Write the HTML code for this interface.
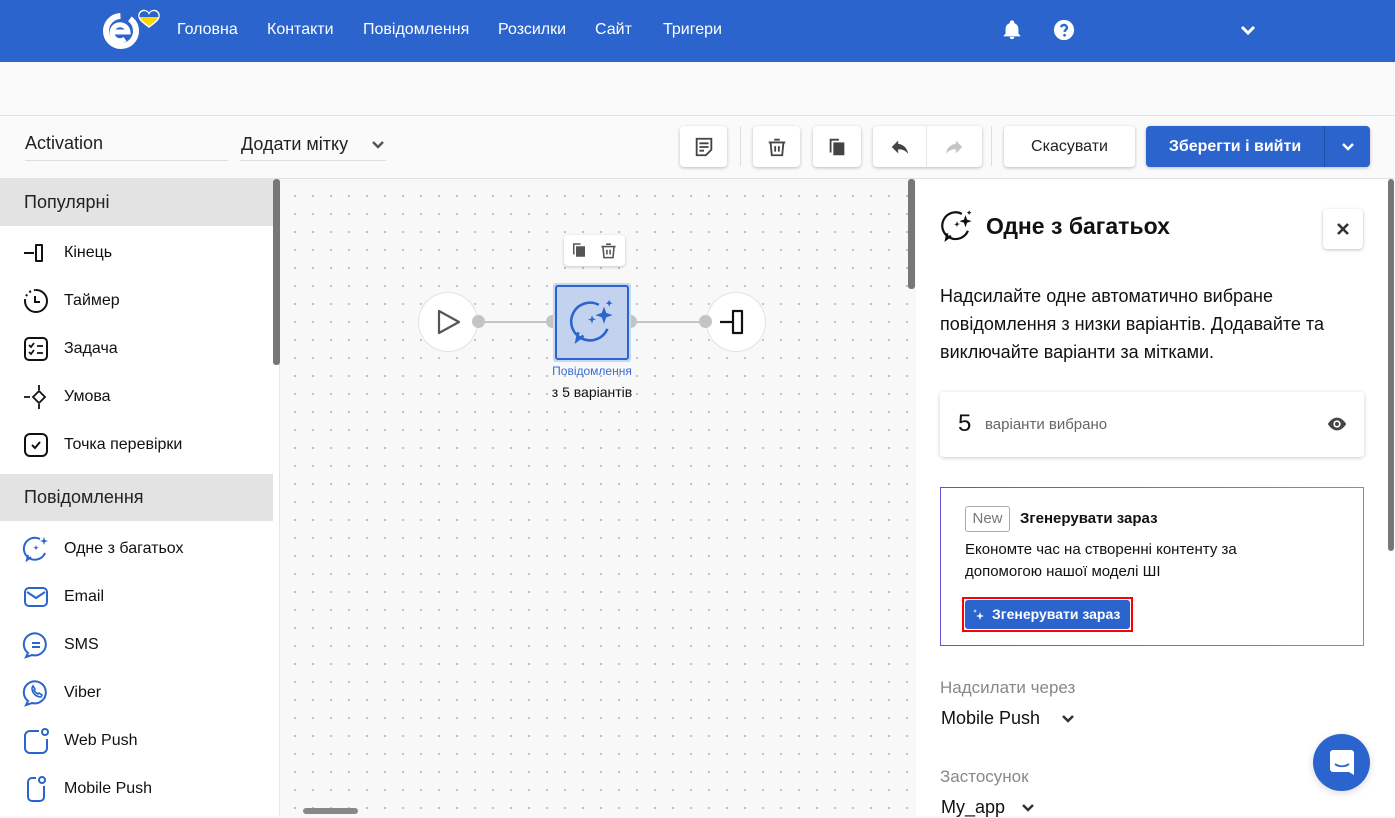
<!DOCTYPE html>
<html><head><meta charset="utf-8"><style>
*{box-sizing:border-box;margin:0;padding:0}
body{width:1395px;height:816px;overflow:hidden;font-family:"Liberation Sans","DejaVu Sans",sans-serif;background:#f9f9f9;position:relative;color:#111}
.abs{position:absolute}
.hdr{left:0;top:0;width:1395px;height:62px;background:#2b64cc}
.nav{color:#fff;font-size:16px;top:21px}
.tb{left:0;top:115px;width:1395px;height:64px;background:#fafafa;border-top:1px solid #e2e2e2;border-bottom:1px solid #e2e2e2}
.btn{background:#fff;border-radius:4px;box-shadow:0 1px 3px rgba(0,0,0,.25);top:126px;height:41px;display:flex;align-items:center;justify-content:center}
.side{left:0;top:179px;width:280px;height:637px;background:#fff;border-right:1px solid #e6e6e6}
.sec{position:absolute;left:0;width:273px;height:47px;background:#e3e3e3;font-size:18px;padding:13px 0 0 24px;color:#222}
.it{position:absolute;left:22px;font-size:16px;display:flex;align-items:center;gap:14px;color:#111}
.it svg{width:28px;height:28px}
.canvas{left:281px;top:179px;width:635px;height:637px;background-color:#f8f8f8;background-image:radial-gradient(circle,#bdbdbd 1px,transparent 1.2px);background-size:18px 18px;background-position:5px 8px}
.panel{left:916px;top:179px;width:479px;height:637px;background:#fff}
</style></head><body>
<div class="abs hdr"></div>
<svg class="abs" style="left:100px;top:8px" width="62" height="44" viewBox="0 0 62 44">
<circle cx="21" cy="23" r="15" fill="none" stroke="#fff" stroke-width="6" stroke-dasharray="70 10"/>
<path d="M12 24h16a8 8 0 1 0-3 7" fill="none" stroke="#fff" stroke-width="5"/>
<path d="M49 19c-5-4-10-7-10-11a4.5 4.5 0 0 1 10-1a4.5 4.5 0 0 1 10 1c0 4-5 7-10 11z" fill="#ffd500" stroke="#fff" stroke-width="1.5"/>
<path d="M39.5 9a4.5 4.5 0 0 1 9.5-2a4.5 4.5 0 0 1 9.5 2z" fill="#2b64cc"/>
</svg>
<div class="abs nav" style="left:177px">Головна</div>
<div class="abs nav" style="left:267px">Контакти</div>
<div class="abs nav" style="left:363px">Повідомлення</div>
<div class="abs nav" style="left:498px">Розсилки</div>
<div class="abs nav" style="left:595px">Сайт</div>
<div class="abs nav" style="left:663px">Тригери</div>
<svg class="abs" style="left:1001px;top:19px" width="22" height="22" viewBox="0 0 24 24"><path d="M12 22a2.5 2.5 0 0 0 2.5-2.5h-5A2.5 2.5 0 0 0 12 22zm7-6V11c0-3-1.6-5.6-4.5-6.3V4a2.5 2.5 0 0 0-5 0v.7C6.6 5.4 5 8 5 11v5l-2 2v1h18v-1z" fill="#fff"/></svg>
<svg class="abs" style="left:1053px;top:19px" width="22" height="22" viewBox="0 0 24 24"><circle cx="12" cy="12" r="11" fill="#fff"/><path d="M8.8 9a3.3 3.3 0 0 1 6.5.5c0 2-2.6 2.3-2.6 4.5" fill="none" stroke="#2b64cc" stroke-width="2.6"/><circle cx="12.6" cy="17.7" r="1.5" fill="#2b64cc"/></svg>
<svg class="abs" style="left:1240px;top:24px" width="16" height="12" viewBox="0 0 16 12"><path d="M2 3l6 6 6-6" fill="none" stroke="#fff" stroke-width="3"/></svg>

<div class="abs tb"></div>
<div class="abs" style="left:25px;top:133px;font-size:18px;color:#222">Activation</div>
<div class="abs" style="left:25px;top:160px;width:203px;height:1px;background:#ddd"></div>
<div class="abs" style="left:241px;top:134px;font-size:18px;color:#222">Додати мітку</div>
<svg class="abs" style="left:371px;top:140px" width="14" height="10" viewBox="0 0 14 10"><path d="M2 2l5 5 5-5" fill="none" stroke="#555" stroke-width="2.5"/></svg>
<div class="abs" style="left:240px;top:160px;width:146px;height:1px;background:#ddd"></div>

<div class="abs btn" style="left:680px;width:47px"><svg width="22" height="22" viewBox="0 0 24 24"><path d="M4 3h16v12l-6 6H4z" fill="none" stroke="#444" stroke-width="2"/><path d="M7 8h10M7 12h10M7 16h5" stroke="#444" stroke-width="2"/></svg></div>
<div class="abs" style="left:740px;top:126px;width:1px;height:40px;background:#ddd"></div>
<div class="abs btn" style="left:753px;width:47px"><svg width="22" height="22" viewBox="0 0 24 24"><path d="M5 7h14l-1.3 14H6.3zM3 7h18M9 4h6M10 11v6M14 11v6" fill="none" stroke="#444" stroke-width="2"/></svg></div>
<div class="abs btn" style="left:813px;width:48px"><svg width="22" height="22" viewBox="0 0 24 24"><path d="M4 3h10v2H6v13H4z" fill="#444"/><rect x="8" y="7" width="12" height="14" fill="#444"/></svg></div>
<div class="abs btn" style="left:873px;width:109px;justify-content:flex-start">
<div style="width:54px;height:41px;display:flex;align-items:center;justify-content:center;border-right:1px solid #e6e6e6"><svg width="22" height="22" viewBox="0 0 24 24"><path d="M10 5L3 12l7 7v-4.5c5 0 8 1.5 11 5-1-5-4-10-11-11z" fill="#444"/></svg></div>
<div style="width:54px;display:flex;justify-content:center"><svg width="22" height="22" viewBox="0 0 24 24"><path d="M14 5l7 7-7 7v-4.5c-5 0-8 1.5-11 5 1-5 4-10 11-11z" fill="#c4c4c4"/></svg></div></div>
<div class="abs" style="left:991px;top:126px;width:1px;height:40px;background:#ddd"></div>
<div class="abs btn" style="left:1004px;width:131px;font-size:16px;color:#222">Скасувати</div>
<div class="abs btn" style="left:1146px;width:224px;background:#2b64cc;justify-content:flex-start">
<div style="width:178px;text-align:center;color:#fff;font-size:16px;font-weight:bold">Зберегти і вийти</div>
<div style="width:1px;height:41px;background:#1f50a8"></div>
<svg style="margin-left:16px" width="14" height="10" viewBox="0 0 14 10"><path d="M2 2l5 5 5-5" fill="none" stroke="#fff" stroke-width="2.5"/></svg></div>

<div class="abs side">
<div class="sec" style="top:0">Популярні</div>
<div class="it" style="top:60px"><svg viewBox="0 0 28 28"><path d="M2 14h10M14 6h6v16h-6z" fill="none" stroke="#111" stroke-width="2" stroke-linejoin="round"/></svg>Кінець</div>
<div class="it" style="top:108px"><svg viewBox="0 0 28 28"><path d="M14 3a11 11 0 1 1-11 11" fill="none" stroke="#111" stroke-width="2"/><path d="M3 14a11 11 0 0 1 11-11" fill="none" stroke="#111" stroke-width="2" stroke-dasharray="2 3"/><path d="M13 9v6h5" fill="none" stroke="#111" stroke-width="2"/></svg>Таймер</div>
<div class="it" style="top:156px"><svg viewBox="0 0 28 28"><rect x="3" y="3" width="22" height="22" rx="4" fill="none" stroke="#111" stroke-width="2"/><path d="M7 10l2 2 3-4M7 17l2 2 3-4M15 11h6M15 18h6" fill="none" stroke="#111" stroke-width="1.8"/></svg>Задача</div>
<div class="it" style="top:204px"><svg viewBox="0 0 28 28"><path d="M17 8l6 6-6 6-6-6zM2 14h6M17 2v5M17 21v5" fill="none" stroke="#111" stroke-width="1.8"/></svg>Умова</div>
<div class="it" style="top:252px"><svg viewBox="0 0 28 28"><rect x="3" y="3" width="22" height="22" rx="5" fill="none" stroke="#111" stroke-width="2"/><path d="M10 14l3 3 5-6" fill="none" stroke="#111" stroke-width="2"/></svg>Точка перевірки</div>
<div class="sec" style="top:295px">Повідомлення</div>
<div class="it" style="top:356px"><svg viewBox="0 0 28 28"><path d="M18 4a11 11 0 1 0 5 14M9 22l-4 3 1-5" fill="none" stroke="#2b64cc" stroke-width="2"/><path d="M22 2l1 3 3 1-3 1-1 3-1-3-3-1 3-1zM14 10l.7 2 2 .7-2 .7-.7 2-.7-2-2-.7 2-.7z" fill="#2b64cc"/></svg>Одне з багатьох</div>
<div class="it" style="top:404px"><svg viewBox="0 0 28 28"><rect x="3" y="5" width="22" height="18" rx="4" fill="none" stroke="#2b64cc" stroke-width="2"/><path d="M5 9l9 6 9-6" fill="none" stroke="#2b64cc" stroke-width="2"/></svg>Email</div>
<div class="it" style="top:452px"><svg viewBox="0 0 28 28"><path d="M6 22a11 11 0 1 1 4 2l-6 2z" fill="none" stroke="#2b64cc" stroke-width="2"/><path d="M10 12h8M10 16h8" stroke="#2b64cc" stroke-width="2"/></svg>SMS</div>
<div class="it" style="top:500px"><svg viewBox="0 0 28 28"><path d="M6 22a11 11 0 1 1 4 2l-6 2z" fill="none" stroke="#2b64cc" stroke-width="2"/><path d="M10 9c0 5 4 9 9 9l1-2-3-2-1 1c-2-1-3-2-4-4l1-1-2-3z" fill="none" stroke="#2b64cc" stroke-width="1.6"/></svg>Viber</div>
<div class="it" style="top:548px"><svg viewBox="0 0 28 28"><path d="M17 4H8a5 5 0 0 0-5 5v12a5 5 0 0 0 5 5h12a5 5 0 0 0 5-5v-9" fill="none" stroke="#2b64cc" stroke-width="2"/><circle cx="23" cy="5" r="3" fill="none" stroke="#2b64cc" stroke-width="2"/></svg>Web Push</div>
<div class="it" style="top:596px"><svg viewBox="0 0 28 28"><path d="M14 3h-4a4 4 0 0 0-4 4v15a4 4 0 0 0 4 4h8a4 4 0 0 0 4-4v-11" fill="none" stroke="#2b64cc" stroke-width="2"/><circle cx="20" cy="5" r="3" fill="none" stroke="#2b64cc" stroke-width="2"/></svg>Mobile Push</div>
</div>
<div class="abs" style="left:273px;top:179px;width:7px;height:186px;background:#777;border-radius:3px"></div>

<div class="abs canvas"></div>
<div class="abs" style="left:908px;top:179px;width:7px;height:110px;background:#777;border-radius:3px"></div>
<div class="abs" style="left:303px;top:808px;width:55px;height:6px;background:#888;border-radius:3px"></div>
<div class="abs" style="left:478px;top:321px;width:75px;height:2px;background:#c4c4c4"></div>
<div class="abs" style="left:631px;top:321px;width:75px;height:2px;background:#c4c4c4"></div>
<div class="abs" style="left:418px;top:292px;width:60px;height:60px;border-radius:50%;background:#fff;border:1px solid #e2e2e2"></div>
<svg class="abs" style="left:436px;top:309px" width="26" height="26" viewBox="0 0 26 26"><path d="M3 2l20 11L3 24z" fill="none" stroke="#555" stroke-width="2.2" stroke-linejoin="round"/></svg>
<div class="abs" style="left:706px;top:292px;width:60px;height:60px;border-radius:50%;background:#fff;border:1px solid #e2e2e2"></div>
<svg class="abs" style="left:718px;top:308px" width="30" height="28" viewBox="0 0 30 28"><path d="M2 14h12M15 3h9v22h-9z" fill="none" stroke="#111" stroke-width="2.2" stroke-linejoin="round"/></svg>
<div class="abs" style="left:472px;top:315px;width:13px;height:13px;border-radius:50%;background:#c4c4c4"></div>
<div class="abs" style="left:546px;top:315px;width:13px;height:13px;border-radius:50%;background:#c4c4c4"></div>
<div class="abs" style="left:624px;top:315px;width:13px;height:13px;border-radius:50%;background:#c4c4c4"></div>
<div class="abs" style="left:699px;top:315px;width:13px;height:13px;border-radius:50%;background:#c4c4c4"></div>
<div class="abs" style="left:553px;top:283px;width:78px;height:79px;background:#c8d6f0;border-radius:3px"></div>
<div class="abs" style="left:555px;top:285px;width:74px;height:75px;background:#c3d3ef;border:2.5px solid #2b64cc;border-radius:3px"></div>
<svg class="abs" style="left:568px;top:298px" width="48" height="48" viewBox="0 0 28 28"><path d="M18 4a11 11 0 1 0 5 14M9 22l-4 3 1-5" fill="none" stroke="#2b64cc" stroke-width="1.5"/><path d="M21 5l1.3 3.7 3.7 1.3-3.7 1.3L21 15l-1.3-3.7L16 10l3.7-1.3zM24 1l.6 1.4 1.4.6-1.4.6L24 5l-.6-1.4L22 3l1.4-.6zM14 10l.6 1.8 1.8.6-1.8.6L14 15l-.6-1.8-1.8-.6 1.8-.6z" fill="#2b64cc"/></svg>
<div class="abs" style="left:564px;top:235px;width:61px;height:31px;background:#fff;border-radius:4px;box-shadow:0 1px 3px rgba(0,0,0,.2)"></div>
<svg class="abs" style="left:570px;top:241px" width="18" height="18" viewBox="0 0 24 24"><path d="M4 3h10v2H6v13H4z" fill="#555"/><rect x="8" y="7" width="12" height="14" fill="#555"/></svg>
<svg class="abs" style="left:599px;top:241px" width="19" height="19" viewBox="0 0 24 24"><path d="M5 7h14l-1.3 14H6.3zM3 7h18M9 4h6M10 11v6M14 11v6" fill="none" stroke="#555" stroke-width="2"/></svg>
<div class="abs" style="left:540px;top:364px;width:104px;text-align:center;font-size:12px;color:#3b6bd0">Повідомлення</div>
<div class="abs" style="left:530px;top:384px;width:124px;text-align:center;font-size:14px;color:#111">з 5 варіантів</div>

<div class="abs panel"></div>
<div class="abs" style="left:1388px;top:179px;width:6px;height:372px;background:#777;border-radius:3px"></div>
<svg class="abs" style="left:940px;top:209px" width="34" height="34" viewBox="0 0 28 28"><path d="M18 4a11 11 0 1 0 5 14M9 22l-4 3 1-5" fill="none" stroke="#111" stroke-width="1.8"/><path d="M21 5l1.3 3.7 3.7 1.3-3.7 1.3L21 15l-1.3-3.7L16 10l3.7-1.3zM24 1l.6 1.4 1.4.6-1.4.6L24 5l-.6-1.4L22 3l1.4-.6zM14 10l.6 1.8 1.8.6-1.8.6L14 15l-.6-1.8-1.8-.6 1.8-.6z" fill="#111"/></svg>
<div class="abs" style="left:986px;top:213px;font-size:23px;font-weight:bold;color:#111">Одне з багатьох</div>
<div class="abs btn" style="left:1323px;top:209px;width:40px;height:40px"><svg width="14" height="14" viewBox="0 0 14 14"><path d="M2 2l10 10M12 2L2 12" stroke="#333" stroke-width="2.6"/></svg></div>
<div class="abs" style="left:940px;top:282px;width:430px;font-size:18px;line-height:28px;color:#111">Надсилайте одне автоматично вибране повідомлення з низки варіантів. Додавайте та виключайте варіанти за мітками.</div>
<div class="abs" style="left:940px;top:392px;width:424px;height:65px;background:#fff;border-radius:4px;box-shadow:0 1px 4px rgba(0,0,0,.2)"></div>
<div class="abs" style="left:958px;top:410px;font-size:24px;color:#111">5</div>
<div class="abs" style="left:985px;top:416px;font-size:15px;color:#666">варіанти вибрано</div>
<svg class="abs" style="left:1326px;top:415px" width="22" height="18" viewBox="0 0 24 18"><path d="M12 2C6 2 2 9 2 9s4 7 10 7 10-7 10-7-4-7-10-7z" fill="#444"/><circle cx="12" cy="9" r="4" fill="#fff"/><circle cx="12" cy="9" r="2.2" fill="#444"/></svg>
<div class="abs" style="left:940px;top:487px;width:424px;height:159px;border:1.5px solid;border-radius:4px;border-image:linear-gradient(90deg,#6a4fd6,#d95ad6) 1;background:#fff"></div>
<div class="abs" style="left:965px;top:506px;width:45px;height:26px;border:1px solid #aaa;border-radius:3px;font-size:15px;color:#777;text-align:center;line-height:24px">New</div>
<div class="abs" style="left:1020px;top:510px;font-size:15px;font-weight:bold;color:#111">Згенерувати зараз</div>
<div class="abs" style="left:965px;top:539px;font-size:15px;line-height:22px;color:#111;width:320px">Економте час на створенні контенту за допомогою нашої моделі ШІ</div>
<div class="abs" style="left:962px;top:597px;width:171px;height:35px;border:2.5px solid #f00"></div>
<div class="abs" style="left:965px;top:600px;width:165px;height:29px;background:#2b64cc;border-radius:3px;color:#fff;font-size:14px;font-weight:bold;line-height:28px;padding-left:27px">Згенерувати зараз</div>
<svg class="abs" style="left:972px;top:608px" width="14" height="14" viewBox="0 0 14 14"><path d="M8 4l1 3 3 1-3 1-1 3-1-3-3-1 3-1zM3 1l.5 1.5L5 3l-1.5.5L3 5l-.5-1.5L1 3l1.5-.5z" fill="#fff"/></svg>
<div class="abs" style="left:940px;top:678px;font-size:17px;color:#888">Надсилати через</div>
<div class="abs" style="left:941px;top:708px;font-size:18px;color:#111">Mobile Push</div>
<svg class="abs" style="left:1061px;top:714px" width="14" height="10" viewBox="0 0 14 10"><path d="M2 2l5 5 5-5" fill="none" stroke="#333" stroke-width="2.5"/></svg>
<div class="abs" style="left:940px;top:767px;font-size:17px;color:#888">Застосунок</div>
<div class="abs" style="left:941px;top:797px;font-size:18px;color:#111">My_app</div>
<svg class="abs" style="left:1021px;top:803px" width="14" height="10" viewBox="0 0 14 10"><path d="M2 2l5 5 5-5" fill="none" stroke="#333" stroke-width="2.5"/></svg>
<div class="abs" style="left:1313px;top:734px;width:57px;height:57px;border-radius:50%;background:#2b64cc;box-shadow:0 2px 8px rgba(0,0,0,.15)"></div>
<svg class="abs" style="left:1329px;top:749px" width="26" height="27" viewBox="0 0 26 27"><path d="M4 1h18a3 3 0 0 1 3 3v22l-5-3H4a3 3 0 0 1-3-3V4a3 3 0 0 1 3-3z" fill="#fff"/><path d="M6 15c4 3 10 3 14 0" fill="none" stroke="#2b64cc" stroke-width="1.8"/></svg>
</body></html>
